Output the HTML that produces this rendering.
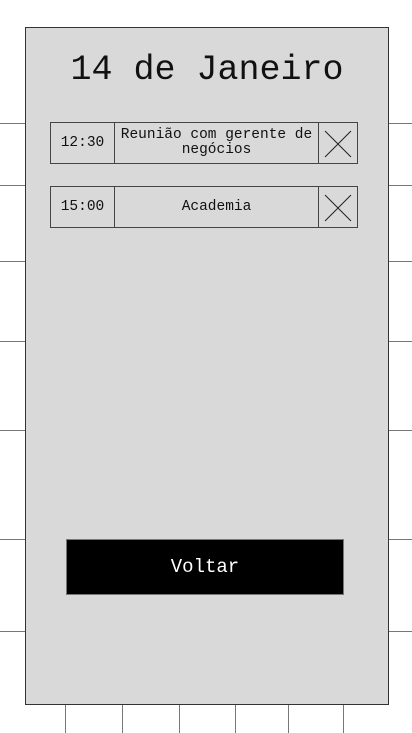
<!DOCTYPE html>
<html><head><style>
body{margin:0;width:412px;height:733px;background:#fff;position:relative;overflow:hidden;font-family:"Liberation Mono",monospace}
.h{position:absolute;left:0;width:412px;height:1px;background:#777}
.v{position:absolute;top:700px;height:33px;width:1px;background:#777}
.panel{position:absolute;left:25px;top:27px;width:362px;height:676px;background:#d9d9d9;border:1px solid #333}
.title{position:absolute;left:26px;top:48px;width:362px;text-align:center;font-size:35px;line-height:44px;color:#111}
.row{position:absolute;left:50px;width:306px;height:40px;border:1px solid #444;display:flex;font-size:14.5px;color:#111}
.row .t{width:63px;border-right:1px solid #444;display:flex;align-items:center;justify-content:center}
.row .d{flex:1;border-right:1px solid #444;display:flex;align-items:center;justify-content:center;text-align:center;line-height:15px}
.row .x{width:38px;position:relative}
.btn{position:absolute;left:66px;top:539px;width:276px;height:54px;background:#000;border:1px solid #777;color:#fff;font-size:19px;display:flex;align-items:center;justify-content:center}
</style></head><body>
<div class="h" style="top:123px"></div><div class="h" style="top:185px"></div><div class="h" style="top:261px"></div><div class="h" style="top:341px"></div><div class="h" style="top:430px"></div><div class="h" style="top:539px"></div><div class="h" style="top:631px"></div>
<div class="v" style="left:65px"></div><div class="v" style="left:122px"></div><div class="v" style="left:179px"></div><div class="v" style="left:235px"></div><div class="v" style="left:288px"></div><div class="v" style="left:343px"></div>
<div class="panel"></div>
<div class="title">14 de Janeiro</div>
<div class="row" style="top:122px"><div class="t">12:30</div><div class="d">Reunião com gerente de<br>negócios</div><div class="x"><svg width="38" height="40"><path d="M6 8L32 34M32 8L6 34" stroke="#222" stroke-width="1"/></svg></div></div>
<div class="row" style="top:186px"><div class="t">15:00</div><div class="d">Academia</div><div class="x"><svg width="38" height="40"><path d="M6 8L32 34M32 8L6 34" stroke="#222" stroke-width="1"/></svg></div></div>
<div class="btn">Voltar</div>
</body></html>
